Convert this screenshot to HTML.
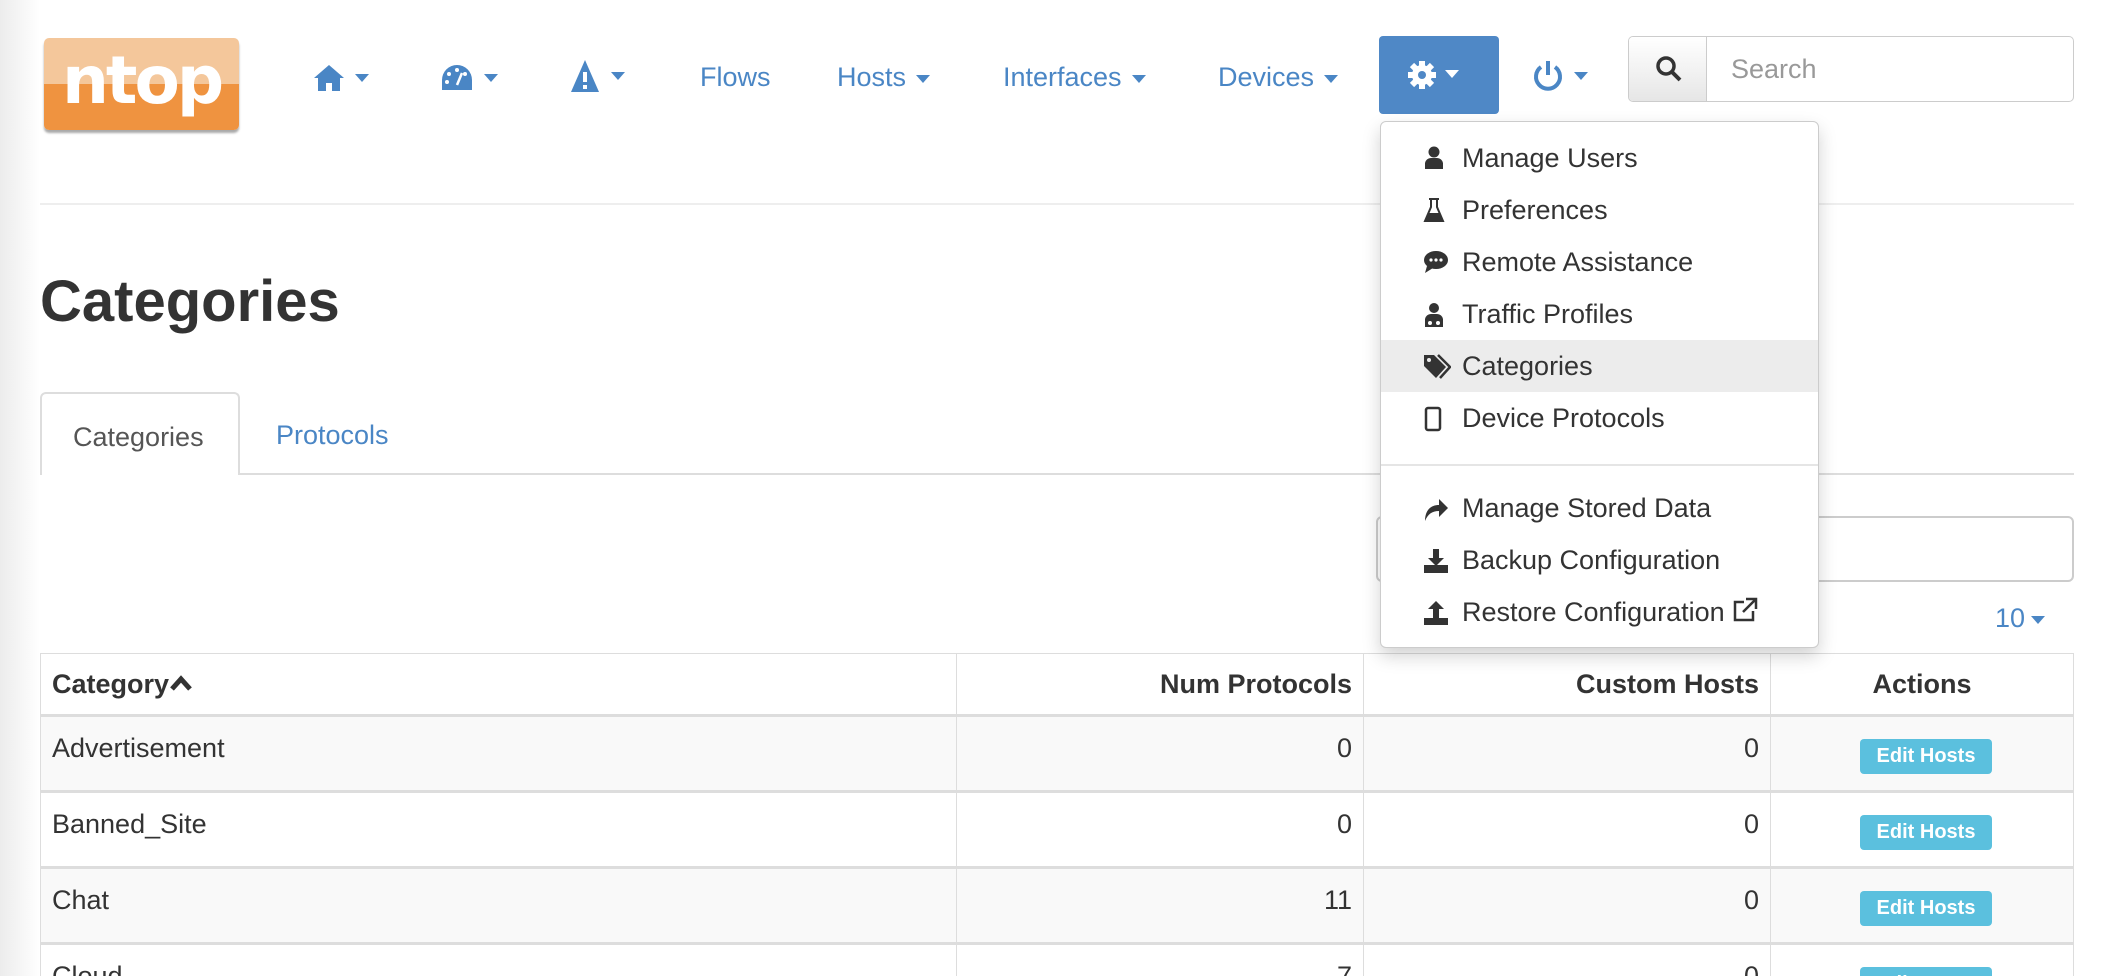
<!DOCTYPE html>
<html style="width:2108px;height:976px;overflow:hidden"><head><meta charset="utf-8"><style>
*{box-sizing:border-box;margin:0;padding:0}
body{width:2108px;height:976px;overflow:hidden;background:#fff;font-family:"Liberation Sans",Arial,sans-serif;color:#333;position:relative}
.lshade{position:absolute;left:0;top:0;width:40px;height:976px;background:linear-gradient(to right,#ececec,#fff)}
.a{position:absolute}
.nav{color:#4a86c5;font-size:27px;top:62px;white-space:nowrap}
.car{display:inline-block;width:0;height:0;border-left:7px solid transparent;border-right:7px solid transparent;border-top:8px solid currentColor;vertical-align:middle;margin-left:10px}
.dd{left:1380px;top:121px;width:439px;height:527px;background:#fff;border:1px solid #ccc;border-radius:6px;box-shadow:0 8px 18px rgba(0,0,0,.18)}
.it{position:absolute;left:0;width:437px;height:52px;font-size:27px;color:#333;line-height:52px;padding-left:81px}
.it svg{position:absolute;left:42px;top:14px}
table{position:absolute;left:40px;top:653px;width:2034px;border-collapse:collapse;font-size:27px}
td,th{border:1px solid #ddd;padding:16px 11px 8px;vertical-align:top;height:76px}
th{height:62px;border-bottom:3px solid #ddd;vertical-align:middle;padding:8px 11px}
tr.o td{background:#f9f9f9}
tbody td{border-bottom:3px solid #ddd}
.r{text-align:right}
.btn{display:inline-block;background:#5bc0de;color:#fff;font-weight:bold;font-size:20px;padding:6px 12px;border-radius:4px;margin-top:6px;margin-left:8px;width:132px;text-align:center}
</style></head><body>
<div class="lshade"></div>
<div class="a" style="left:44px;top:38px;width:195px;height:92px;border-radius:5px;overflow:hidden;box-shadow:0 3px 2px #aaa">
<div style="height:46px;background:#f4c79b"></div><div style="height:46px;background:#ef9340"></div>
<div class="a" style="left:0;top:0;width:195px;text-align:center;font-size:66px;font-weight:bold;color:#fff;line-height:86px;letter-spacing:-3px;font-family:'DejaVu Sans',sans-serif">ntop</div></div>
<div class="a nav" style="left:313px;top:61px"><svg width="32" height="30" viewBox="0 0 32 30" style="vertical-align:middle"><path d="M16 2L1 15h4v13h8v-8h6v8h8V15h4z" fill="#4a86c5"/></svg><span class="car"></span></div>
<div class="a nav" style="left:440px;top:61px"><svg width="34" height="30" viewBox="0 0 34 30" style="vertical-align:middle"><path d="M17 2A15 15 0 0 0 2 17v10h30V17A15 15 0 0 0 17 2z" fill="#4a86c5"/><circle cx="17" cy="7" r="2" fill="#fff"/><circle cx="9" cy="11" r="2" fill="#fff"/><circle cx="25" cy="11" r="2" fill="#fff"/><circle cx="7" cy="19" r="2" fill="#fff"/><path d="M17 22L22 10" stroke="#fff" stroke-width="2.5"/></svg><span class="car"></span></div>
<div class="a nav" style="left:569px;top:59px"><svg width="32" height="34" viewBox="0 0 32 34" style="vertical-align:middle"><path d="M16 1L2 33h28z" fill="#4a86c5"/><rect x="14" y="13" width="4" height="10" fill="#fff"/><rect x="14" y="26" width="4" height="4" fill="#fff"/></svg><span class="car"></span></div>
<div class="a nav" style="left:700px">Flows</div>
<div class="a nav" style="left:837px">Hosts<span class="car"></span></div>
<div class="a nav" style="left:1003px">Interfaces<span class="car"></span></div>
<div class="a nav" style="left:1218px">Devices<span class="car"></span></div>
<div class="a" style="left:1379px;top:36px;width:120px;height:78px;background:#4f88c6;border-radius:4px;color:#fff">
<svg class="a" style="left:28px;top:24px" width="30" height="30" viewBox="0 0 30 30"><g fill="#fff"><circle cx="15" cy="15" r="10"/><g stroke="#fff" stroke-width="6"><path d="M15 1v28M1 15h28M5 5l20 20M25 5L5 25"/></g></g><circle cx="15" cy="15" r="4" fill="#4f88c6"/></svg>
<span class="car" style="position:absolute;left:66px;top:34px;margin:0"></span></div>
<div class="a nav" style="left:1532px;top:59px"><svg width="32" height="34" viewBox="0 0 32 34" style="vertical-align:middle"><path d="M9 8A12 12 0 1 0 23 8" fill="none" stroke="#4a86c5" stroke-width="4"/><path d="M16 2v14" stroke="#4a86c5" stroke-width="4"/></svg><span class="car"></span></div>
<div class="a" style="left:1628px;top:36px;width:446px;height:66px;border:1px solid #ccc;border-radius:5px;overflow:hidden">
<div class="a" style="left:0;top:0;width:78px;height:64px;background:linear-gradient(#fff,#e6e6e6);border-right:1px solid #ccc"><svg class="a" style="left:26px;top:18px" width="28" height="28" viewBox="0 0 28 28"><circle cx="11" cy="11" r="8" fill="none" stroke="#333" stroke-width="3.5"/><path d="M17 17l8 8" stroke="#333" stroke-width="4"/></svg></div>
<div class="a" style="left:102px;top:17px;font-size:27px;color:#999">Search</div></div>
<div class="a" style="left:40px;top:203px;width:2034px;height:2px;background:#eee"></div>
<div class="a" style="left:40px;top:268px;font-size:58px;font-weight:bold;color:#333">Categories</div>
<div class="a" style="left:40px;top:473px;width:2034px;height:2px;background:#ddd"></div>
<div class="a" style="left:40px;top:392px;width:200px;height:83px;border:2px solid #ddd;border-bottom:none;border-radius:6px 6px 0 0;background:#fff;font-size:27px;color:#555;padding:28px 0 0 31px">Categories</div>
<div class="a" style="left:276px;top:420px;font-size:27px;color:#4a86c5">Protocols</div>
<div class="a" style="left:1376px;top:516px;width:698px;height:66px;border:2px solid #ccc;border-radius:6px"></div>
<div class="a" style="left:1995px;top:603px;font-size:27px;color:#4a86c5">10<span class="car" style="margin-left:6px"></span></div>
<table>
<thead><tr><th style="text-align:left;width:916px">Category<svg width="24" height="18" viewBox="0 0 24 18" style="vertical-align:1px"><path d="M3 15L12 5l9 10" fill="none" stroke="#333" stroke-width="5"/></svg></th><th class="r" style="width:407px">Num Protocols</th><th class="r" style="width:407px">Custom Hosts</th><th>Actions</th></tr></thead>
<tbody>
<tr class="o"><td>Advertisement</td><td class="r">0</td><td class="r">0</td><td style="text-align:center"><span class="btn">Edit Hosts</span></td></tr>
<tr><td>Banned_Site</td><td class="r">0</td><td class="r">0</td><td style="text-align:center"><span class="btn">Edit Hosts</span></td></tr>
<tr class="o"><td>Chat</td><td class="r">11</td><td class="r">0</td><td style="text-align:center"><span class="btn">Edit Hosts</span></td></tr>
<tr><td>Cloud</td><td class="r">7</td><td class="r">0</td><td style="text-align:center"><span class="btn">Edit Hosts</span></td></tr>
</tbody></table>
<div class="a dd">
<div class="it" style="top:10px"><svg width="22" height="24" viewBox="0 0 22 24"><circle cx="11" cy="6" r="5.5" fill="#333"/><path d="M2 23v-6a6 6 0 0 1 6-5h6a6 6 0 0 1 6 5v6z" fill="#333"/></svg>Manage Users</div>
<div class="it" style="top:62px"><svg width="22" height="24" viewBox="0 0 22 24"><path d="M6 1h10M8 1v8L2 23h18L14 9V1" fill="none" stroke="#333" stroke-width="2"/><path d="M5 15h12l3 8H2z" fill="#333"/></svg>Preferences</div>
<div class="it" style="top:114px"><svg width="26" height="24" viewBox="0 0 26 24"><ellipse cx="13" cy="10" rx="12" ry="9" fill="#333"/><path d="M4 16L2 23l8-5z" fill="#333"/><circle cx="8" cy="10" r="1.6" fill="#fff"/><circle cx="13" cy="10" r="1.6" fill="#fff"/><circle cx="18" cy="10" r="1.6" fill="#fff"/></svg>Remote Assistance</div>
<div class="it" style="top:166px"><svg width="22" height="26" viewBox="0 0 22 26"><circle cx="11" cy="6" r="5" fill="#333"/><path d="M2 25v-8a6 6 0 0 1 6-5h6a6 6 0 0 1 6 5v8z" fill="#333"/><circle cx="7" cy="21" r="2" fill="#fff"/><circle cx="15" cy="21" r="2" fill="#fff"/></svg>Traffic Profiles</div>
<div class="it" style="top:218px;background:#ececec"><svg width="28" height="26" viewBox="0 0 28 26"><path d="M1 1h10l12 12-10 11L1 12z" fill="#333"/><circle cx="6" cy="6" r="2" fill="#ececec"/><path d="M15 1l12 12-10 11" fill="none" stroke="#333" stroke-width="2.5"/></svg>Categories</div>
<div class="it" style="top:270px"><svg width="20" height="26" viewBox="0 0 20 26"><rect x="3" y="2" width="14" height="22" rx="2" fill="none" stroke="#333" stroke-width="2.5"/></svg>Device Protocols</div>
<div class="a" style="left:0;top:342px;width:437px;height:2px;background:#e5e5e5"></div>
<div class="it" style="top:360px"><svg width="26" height="26" viewBox="0 0 26 26"><path d="M2 25C2 14 8 9 16 9V3l9 9-9 9v-6C9 15 5 18 2 25z" fill="#333"/></svg>Manage Stored Data</div>
<div class="it" style="top:412px"><svg width="26" height="26" viewBox="0 0 26 26"><path d="M10 1h6v9h5l-8 8-8-8h5z" fill="#333"/><rect x="1" y="17" width="24" height="8" fill="#333"/></svg>Backup Configuration</div>
<div class="it" style="top:464px"><svg width="26" height="26" viewBox="0 0 26 26"><path d="M10 18h6V9h5l-8-8-8 8h5z" fill="#333"/><rect x="1" y="18" width="24" height="7" fill="#333"/></svg>Restore Configuration <svg style="position:static;vertical-align:-2px" width="26" height="26" viewBox="0 0 26 26"><path d="M12 5H3v18h18v-9" fill="none" stroke="#333" stroke-width="2.5"/><path d="M14 2h10v10M24 2L11 15" fill="none" stroke="#333" stroke-width="2.5"/></svg></div>
</div>
</body></html>
